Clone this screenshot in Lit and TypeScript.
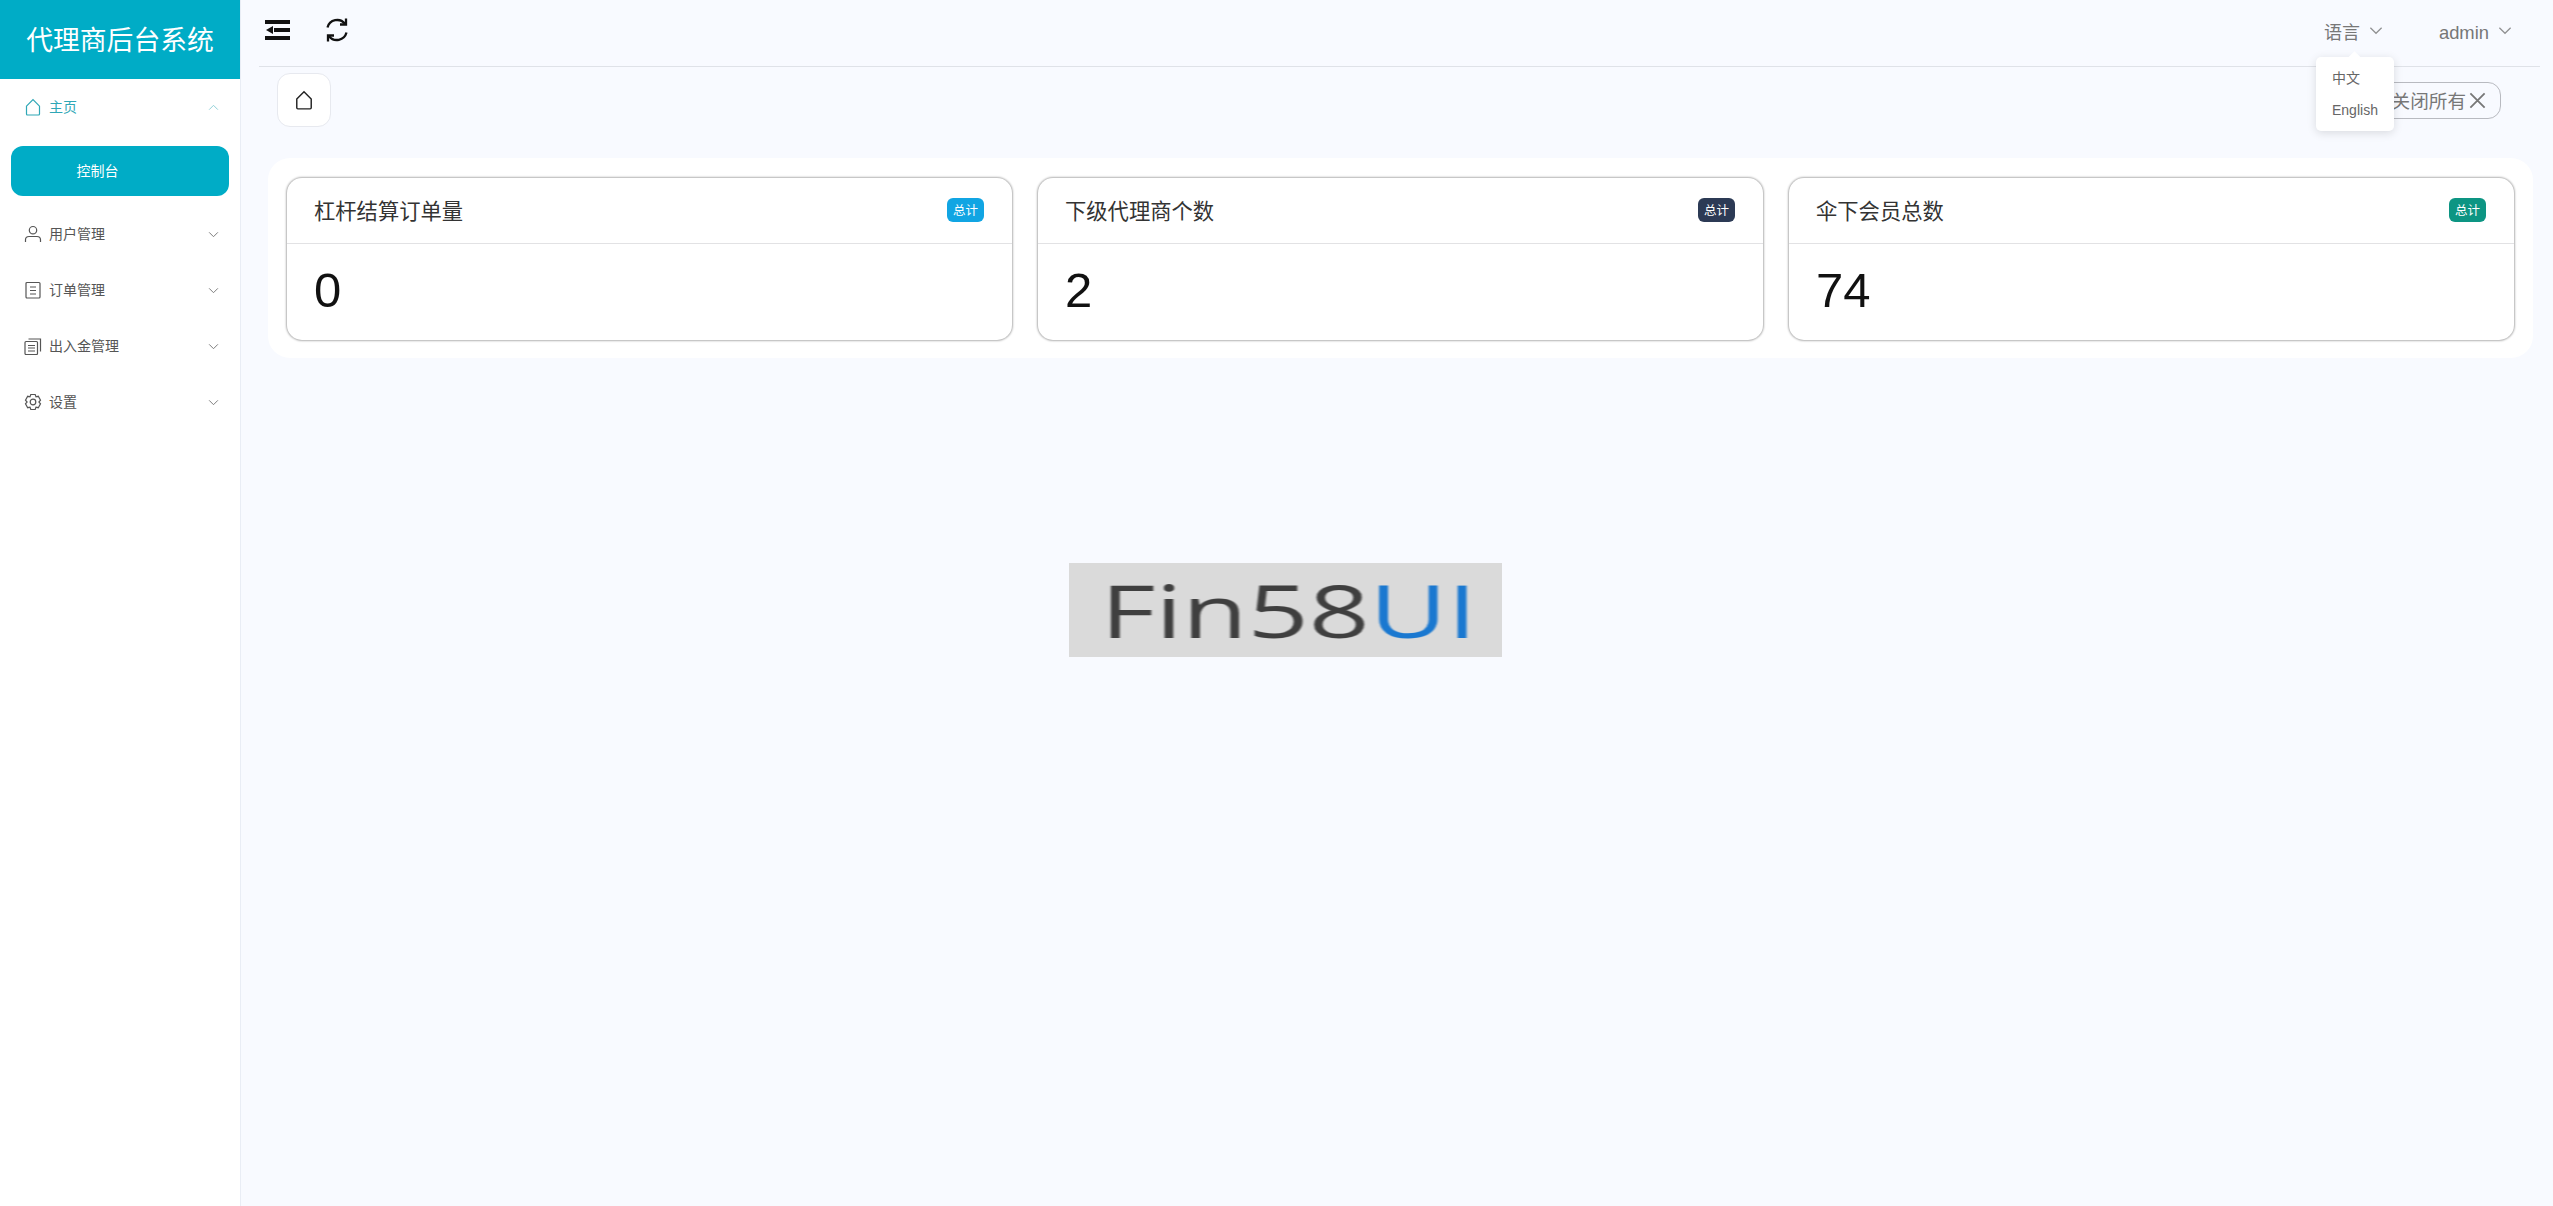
import { LitElement, html, css, svg } from "lit";
import { customElement } from "lit/decorators.js";

const chevronDown = html`<svg class="chev" viewBox="0 0 12 8"><path d="M1 1.5 6 6.5 11 1.5"/></svg>`;
const chevronUp = html`<svg class="chev" viewBox="0 0 12 8"><path d="M1 6.5 6 1.5 11 6.5"/></svg>`;

const homeIcon = svg`<path d="M2.5 8.2 9 1.5l6.5 6.7V16a1 1 0 0 1-1 1h-11a1 1 0 0 1-1-1Z"/>`;
const userIcon = svg`<circle cx="9" cy="5.2" r="3.7"/><path d="M1.5 17v-2.2c0-2 1.6-3.3 3.5-3.3h8c1.9 0 3.5 1.3 3.5 3.3V17"/>`;
const docIcon = svg`<rect x="2" y="1.5" width="14" height="15.5" rx="1"/><path d="M6 6h6M6 9.5h6M6 13h6"/>`;
const copyIcon = svg`<rect x="1" y="4.5" width="12.5" height="13" rx="1"/><path d="M4.5 2h12v12.5M4 8.5h7M4 11h7M4 14h7"/>`;
const gearIcon = svg`<path d="M6.8 1.5h4.4l.8 2.3 2.3-.5 2.2 3.8-1.6 1.9 1.6 1.9-2.2 3.8-2.3-.5-.8 2.3H6.8L6 14.2l-2.3.5-2.2-3.8L3.1 9 1.5 7.1l2.2-3.8 2.3.5Z"/><circle cx="9" cy="9" r="2.8"/>`;

const menu = [
  { label: "用户管理", icon: userIcon },
  { label: "订单管理", icon: docIcon },
  { label: "出入金管理", icon: copyIcon },
  { label: "设置", icon: gearIcon },
];

const cards = [
  { title: "杠杆结算订单量", value: "0", tone: "blue" },
  { title: "下级代理商个数", value: "2", tone: "navy" },
  { title: "伞下会员总数", value: "74", tone: "green" },
];

@customElement("app-root")
export class AppRoot extends LitElement {
  static styles = css`
    :host {
      display: grid;
      grid-template-columns: 241px 1fr;
      height: 1206px;
      overflow: hidden;
      background: #f8faff;
      font-family: "Liberation Sans", "Noto Sans CJK SC", sans-serif;
      color: #555;
    }
    .side {
      background: #fff;
      border-right: 1px solid #e9edf5;
    }
    .brand {
      height: 79px;
      background: #00acc6;
      color: #fff;
      font-size: 26.8px;
      display: flex;
      align-items: center;
      justify-content: center;
      padding-bottom: 2px;
      box-sizing: border-box;
    }
    .row {
      height: 56px;
      display: flex;
      align-items: center;
      padding: 0 21px 0 24px;
      box-sizing: border-box;
      font-size: 14px;
      color: #555;
    }
    .row.open {
      color: #2fa7b6;
    }
    .row .ico {
      width: 18px;
      height: 18px;
      margin-right: 7px;
      fill: none;
      stroke: currentColor;
      stroke-width: 1.2;
    }
    .row span {
      flex: 1;
      padding-bottom: 3px;
    }
    .chev {
      width: 11px;
      height: 7px;
      fill: none;
      stroke: currentColor;
      stroke-width: 1.1;
      opacity: 0.8;
    }
    .row.open .chev {
      opacity: 0.55;
    }
    .active {
      margin: 11px 11px 10px 11px;
      height: 50px;
      border-radius: 12px;
      background: #00acc6;
      color: #fff;
      font-size: 14px;
      display: flex;
      align-items: center;
      justify-content: center;
      padding: 0 45px 2px 0;
      box-sizing: border-box;
    }
    .main {
      position: relative;
      min-width: 0;
    }
    .top {
      height: 67px;
      margin: 0 13px 0 18px;
      border-bottom: 1px solid #dfe2e8;
      display: flex;
      align-items: center;
      padding: 0 0 7px 6px;
      box-sizing: border-box;
    }
    .tool {
      width: 25px;
      height: 22px;
      color: #111;
    }
    .tool + .tool {
      margin-left: 34px;
      width: 26px;
      height: 26px;
    }
    .spacer {
      flex: 1;
    }
    .menu-label {
      display: flex;
      align-items: center;
      font-size: 18px;
      line-height: 24px;
      color: #777;
      margin-top: 7px;
    }
    .menu-label .chev {
      width: 14px;
      height: 9px;
      margin: -6px 0 0 9px;
    }
    .lang {
      margin-right: 56px;
    }
    .user {
      margin-right: 28px;
      font-size: 18.4px;
    }
    .tabs {
      display: flex;
      align-items: center;
      justify-content: space-between;
      margin: 6px 52px 0 36px;
      height: 54px;
    }
    .home-tab {
      width: 54px;
      height: 54px;
      box-sizing: border-box;
      border: 1px solid #e7e9ef;
      border-radius: 13px;
      background: #fff;
      display: flex;
      align-items: center;
      justify-content: center;
    }
    .home-tab svg {
      width: 20px;
      height: 20px;
      fill: none;
      stroke: #222;
      stroke-width: 1.3;
    }
    .close-all {
      height: 37px;
      box-sizing: border-box;
      border: 1px solid #b8bac0;
      border-radius: 13px;
      font-size: 18.6px;
      color: #777;
      display: flex;
      align-items: center;
      gap: 2px;
      padding: 0 13px 2px 30px;
    }
    .close-all svg {
      width: 19px;
      height: 19px;
      stroke: #777;
      stroke-width: 1.5;
      fill: none;
      margin-top: 2px;
    }
    .panel {
      margin: 31px 20px 0 27px;
      padding: 20px 19px 18px 19px;
      background: #fff;
      border-radius: 22px;
      display: grid;
      grid-template-columns: repeat(3, 1fr);
      gap: 26px;
    }
    .card {
      height: 162px;
      box-sizing: border-box;
      background: #fff;
      border-radius: 15px;
      box-shadow: 0 0 2px 1px rgba(0, 0, 0, 0.3);
    }
    .card-head {
      height: 66px;
      border-bottom: 1px solid #e2e2e4;
      display: flex;
      align-items: center;
      justify-content: space-between;
      padding: 0 28px 2px 27px;
      box-sizing: border-box;
      font-size: 21.3px;
      color: #333;
    }
    .badge {
      width: 37px;
      height: 24px;
      border-radius: 6px;
      color: #fff;
      font-size: 12.5px;
      display: flex;
      align-items: center;
      justify-content: center;
    }
    .blue { background: #11a5e3; }
    .navy { background: #2c3a55; }
    .green { background: #0d9583; }
    .card-body {
      padding-left: 27px;
      font-size: 49px;
      line-height: 93px;
      color: #111;
    }
    .logo {
      width: 433px;
      height: 94px;
      margin: 205px 0 0 828px;
      background: #dadada;
      display: flex;
      align-items: center;
      justify-content: center;
      font-family: "Open Sans", "Noto Sans", sans-serif;
      font-size: 74px;
      line-height: 90px;
      color: #3f3f3f;
    }
    .logo b {
      font-weight: 500;
      color: #1a78d0;
    }
    .logo-inner {
      display: inline-block;
      font-weight: 500;
      white-space: nowrap;
      transform: translateX(3px) scaleX(1.44);
      filter: blur(0.6px);
    }
    .dropdown {
      position: absolute;
      left: 2075px;
      top: 57px;
      width: 78px;
      height: 74px;
      background: #fff;
      border-radius: 5px;
      box-shadow: 0 2px 10px rgba(0, 0, 0, 0.13);
      font-size: 14px;
      color: #666;
      box-sizing: border-box;
      padding: 5px 0 0 16px;
      line-height: 32px;
    }
    .dropdown::before {
      content: "";
      position: absolute;
      left: 34px;
      top: -4px;
      width: 9px;
      height: 9px;
      background: #fff;
      transform: rotate(45deg);
    }
    .dropdown div {
      position: relative;
    }
  `;

  render() {
    return html`
      <aside class="side">
        <div class="brand">代理商后台系统</div>
        <div class="row open">
          <svg class="ico" viewBox="0 0 18 18">${homeIcon}</svg>
          <span>主页</span>
          ${chevronUp}
        </div>
        <div class="active">控制台</div>
        ${menu.map(
          (m) => html`<div class="row">
            <svg class="ico" viewBox="0 0 18 18">${m.icon}</svg>
            <span>${m.label}</span>
            ${chevronDown}
          </div>`
        )}
      </aside>
      <div class="main">
        <header class="top">
          <svg class="tool" viewBox="0 0 25 22">
            <path d="M0 1h25v4H0ZM9 9h16v4H9ZM0 17h25v4H0Z" fill="#111" />
            <path d="M1 11 8 7v8Z" fill="#111" />
          </svg>
          <svg class="tool" viewBox="0 0 26 26" fill="none" stroke="#111" stroke-width="2.3">
            <path d="M3.5 10.5A10 10 0 0 1 21 6.8" />
            <path d="M22.5 15.5A10 10 0 0 1 5 19.2" />
            <path d="M22 1.5V7.5H16" />
            <path d="M4 24.5V18.5H10" />
          </svg>
          <div class="spacer"></div>
          <div class="menu-label lang">语言${chevronDown}</div>
          <div class="menu-label user">admin${chevronDown}</div>
        </header>
        <div class="tabs">
          <div class="home-tab">
            <svg viewBox="0 0 18 18">${homeIcon}</svg>
          </div>
          <div class="close-all">
            关闭所有
            <svg viewBox="0 0 16 16"><path d="M2 2 14 14M14 2 2 14" /></svg>
          </div>
        </div>
        <section class="panel">
          ${cards.map(
            (c) => html`<div class="card">
              <div class="card-head">
                <span>${c.title}</span>
                <span class="badge ${c.tone}">总计</span>
              </div>
              <div class="card-body">${c.value}</div>
            </div>`
          )}
        </section>
        <div class="logo"><span class="logo-inner">Fin58<b>UI</b></span></div>
        <div class="dropdown">
          <div>中文</div>
          <div>English</div>
        </div>
      </div>
    `;
  }
}
